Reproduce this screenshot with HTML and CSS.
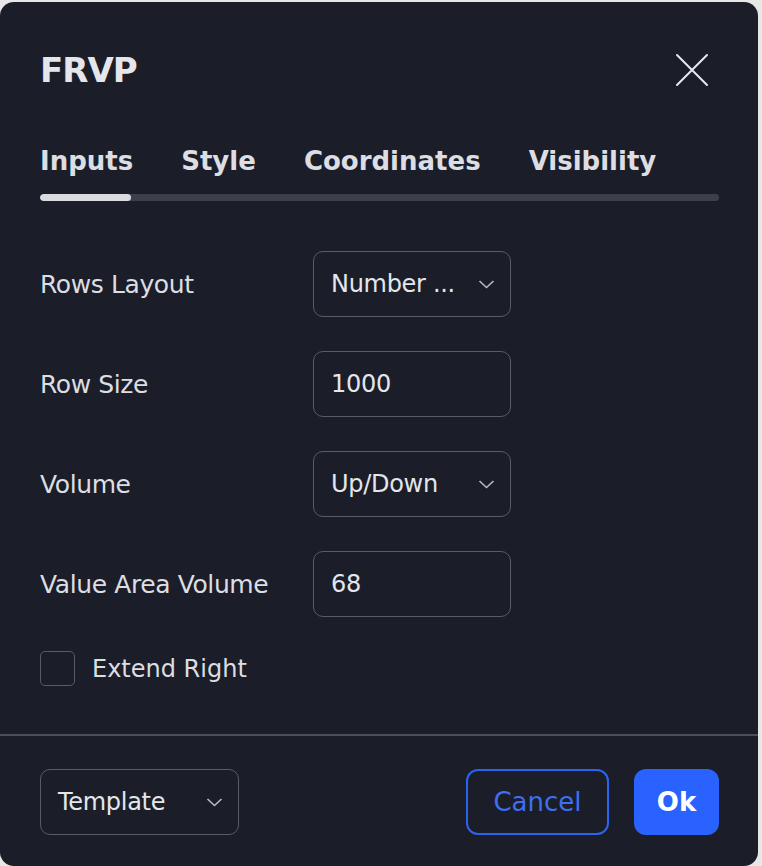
FILE: index.html
```html
<!DOCTYPE html>
<html>
<head>
<meta charset="utf-8">
<link rel="stylesheet" href="styles.css">
</head>
<body>
<div class="dialog">
  <div class="header">
    <div class="title">FRVP</div>
    <button class="close" aria-label="Close">
      <svg width="34" height="34" viewBox="0 0 34 34"><path d="M2 2 L32 32 M32 2 L2 32" stroke="#e6e8ee" stroke-width="2" fill="none" stroke-linecap="round"/></svg>
    </button>
  </div>
  <div class="tabs">
    <div class="tab-row">
      <span class="tab active">Inputs</span>
      <span class="tab">Style</span>
      <span class="tab">Coordinates</span>
      <span class="tab">Visibility</span>
    </div>
    <div class="track"><div class="track-active"></div></div>
  </div>
  <div class="form">
    <div class="label">Rows Layout</div>
    <div class="field select"><span class="value">Number ...</span><svg class="chev" width="17" height="10" viewBox="0 0 17 10"><path d="M1.5 2 L8.5 8.5 L15.5 2" stroke="#b8bbc4" stroke-width="1.6" fill="none"/></svg></div>
    <div class="label">Row Size</div>
    <div class="field"><span class="value">1000</span></div>
    <div class="label">Volume</div>
    <div class="field select"><span class="value">Up/Down</span><svg class="chev" width="17" height="10" viewBox="0 0 17 10"><path d="M1.5 2 L8.5 8.5 L15.5 2" stroke="#b8bbc4" stroke-width="1.6" fill="none"/></svg></div>
    <div class="label">Value Area Volume</div>
    <div class="field"><span class="value">68</span></div>
  </div>
  <div class="check-row">
    <span class="checkbox"></span>
    <span class="check-label">Extend Right</span>
  </div>
  <div class="divider"></div>
  <div class="footer">
    <div class="field select template"><span class="value">Template</span><svg class="chev" width="17" height="10" viewBox="0 0 17 10"><path d="M1.5 2 L8.5 8.5 L15.5 2" stroke="#b8bbc4" stroke-width="1.6" fill="none"/></svg></div>
    <div class="actions">
      <button class="btn cancel">Cancel</button>
      <button class="btn ok">Ok</button>
    </div>
  </div>
</div>
</body>
</html>
```
FILE: styles.css
```css
html, body {
  margin: 0;
  padding: 0;
  background: #e8e6e6;
}
body {
  font-family: "DejaVu Sans", "Liberation Sans", sans-serif;
  color: #dcdee4;
  overflow: hidden;
}
.dialog {
  margin-top: 2px;
  width: 758px;
  height: 864px;
  background: #1b1e28;
  border-radius: 14px;
  display: flex;
  flex-direction: column;
  box-sizing: border-box;
}
.header {
  display: flex;
  align-items: center;
  justify-content: space-between;
  padding: 40px 50px 0 40px;
  height: 56px;
}
.title {
  font-weight: bold;
  font-size: 34px;
  letter-spacing: -1px;
  line-height: 56px;
  color: #e4e6ec;
}
.close {
  background: none;
  border: none;
  padding: 0;
  width: 34px;
  height: 34px;
  margin-right: -1px;
  display: flex;
}
.tabs {
  margin: 45px 39px 0 40px;
}
.tab-row {
  display: flex;
  gap: 48px;
  height: 36px;
  align-items: center;
}
.tab {
  font-weight: bold;
  font-size: 26px;
  line-height: 36px;
  color: #dcdee4;
}
.track {
  margin-top: 15px;
  height: 7px;
  border-radius: 4px;
  background: #3c404b;
  overflow: hidden;
}
.track-active {
  width: 91px;
  height: 100%;
  border-radius: 4px;
  background: #d9dbe1;
}
.form {
  margin-top: 50px;
  padding-left: 40px;
  display: grid;
  grid-template-columns: 273px 198px;
  grid-auto-rows: 66px;
  row-gap: 34px;
  align-items: center;
}
.label {
  font-size: 25px;
  letter-spacing: -0.4px;
  color: #dcdee4;
}
.field {
  height: 66px;
  box-sizing: border-box;
  border: 1.5px solid #585c67;
  border-radius: 10px;
  display: flex;
  align-items: center;
  justify-content: space-between;
  padding: 0 15px 0 17px;
  font-size: 24px;
  letter-spacing: -0.3px;
  color: #e4e6ec;
}
.chev {
  flex: none;
}
.check-row {
  margin-top: 34px;
  padding-left: 40px;
  display: flex;
  align-items: center;
  height: 35px;
}
.checkbox {
  width: 35px;
  height: 35px;
  box-sizing: border-box;
  border: 1.5px solid #585c67;
  border-radius: 5px;
}
.check-label {
  margin-left: 17px;
  font-size: 24px;
  color: #dcdee4;
}
.divider {
  margin-top: 48px;
  height: 1.5px;
  background: #4a4e59;
}
.footer {
  padding: 33px 39px 0 40px;
  display: flex;
  align-items: center;
  justify-content: space-between;
}
.template {
  width: 199px;
}
.actions {
  display: flex;
  gap: 25px;
}
.btn {
  height: 66px;
  box-sizing: border-box;
  border-radius: 12px;
  font-family: "DejaVu Sans", "Liberation Sans", sans-serif;
  font-size: 26px;
  padding: 0;
}
.cancel {
  width: 143px;
  background: transparent;
  border: 2px solid #2a63f0;
  color: #3d6ff0;
}
.ok {
  width: 85px;
  background: #2962ff;
  border: none;
  color: #ffffff;
  font-weight: bold;
}
```
